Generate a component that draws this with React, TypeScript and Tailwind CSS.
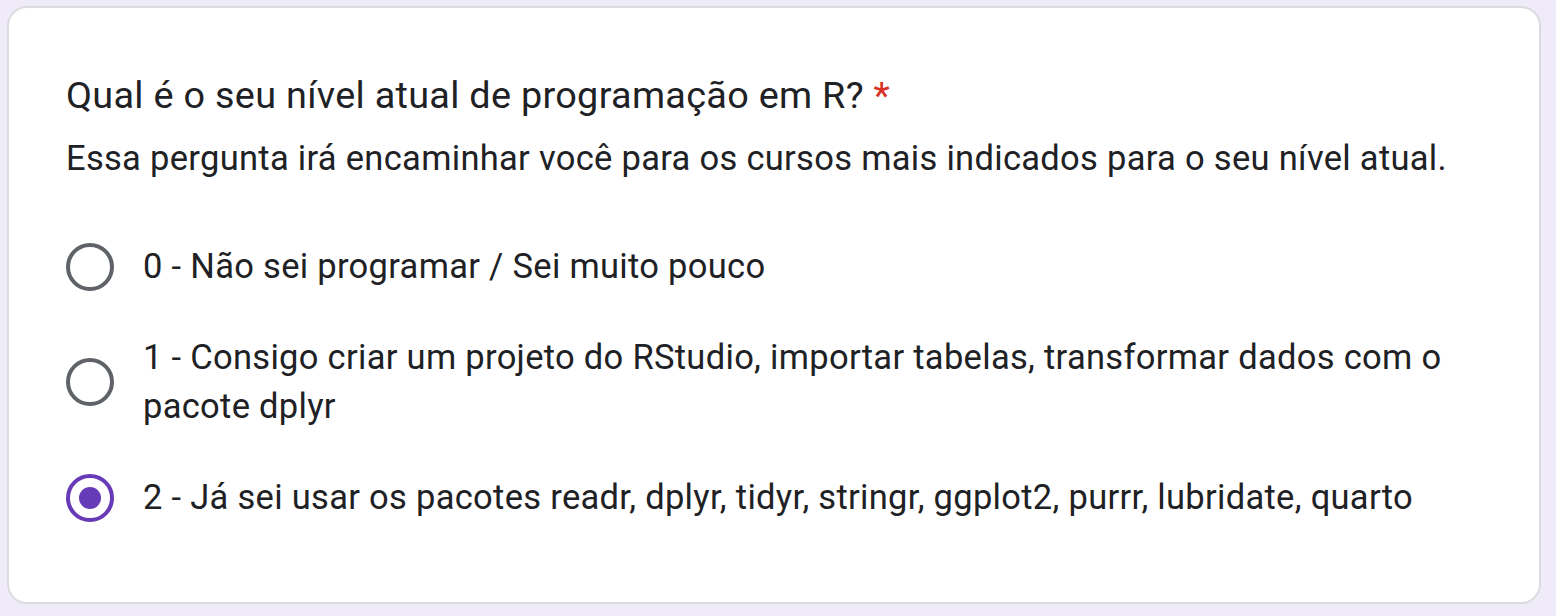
import { useState } from "react";

const options = [
  "0 - Não sei programar / Sei muito pouco",
  "1 - Consigo criar um projeto do RStudio, importar tabelas, transformar dados com o pacote dplyr",
  "2 - Já sei usar os pacotes readr, dplyr, tidyr, stringr, ggplot2, purrr, lubridate, quarto",
];

const Radio = ({ checked }: { checked: boolean }) => (
  <div
    className={
      checked
        ? "w-[48px] h-[48px] shrink-0 rounded-full border-[4px] border-[#673ab7] flex items-center justify-center"
        : "w-[48px] h-[48px] shrink-0 rounded-full border-[4px] border-[#5f6368]"
    }
  >
    {checked && <div className="w-[22px] h-[22px] rounded-full bg-[#673ab7]" />}
  </div>
);

const App = () => {
  const [selected, setSelected] = useState(2);
  return (
    <div className="w-[1556px] h-[616px] bg-[#f0ebf8] pt-[6px] pl-[7px] font-['Roboto',sans-serif] text-[#202124] tracking-[0.3px]">
      <div className="w-[1534px] h-[598px] bg-white border-2 border-[#dadce0] rounded-[20px] pl-[57px] pr-[69px] pt-[63px]">
        <h1 className="text-[37.8px] leading-[48px]">
          Qual é o seu nível atual de programação em R? <span className="text-[#d93025]">*</span>
        </h1>
        <p className="text-[34.5px] leading-[40px] mt-[19px]">
          Essa pergunta irá encaminhar você para os cursos mais indicados para o seu nível atual.
        </p>
        <div className="flex flex-col mt-[64px] gap-[42px]">
          {options.map((o, i) => (
            <label
              key={i}
              className="flex items-center gap-[29px] cursor-pointer"
              onClick={() => setSelected(i)}
            >
              <Radio checked={selected === i} />
              <span className="text-[34.5px] leading-[49px]">{o}</span>
            </label>
          ))}
        </div>
      </div>
    </div>
  );
};

export default App;
